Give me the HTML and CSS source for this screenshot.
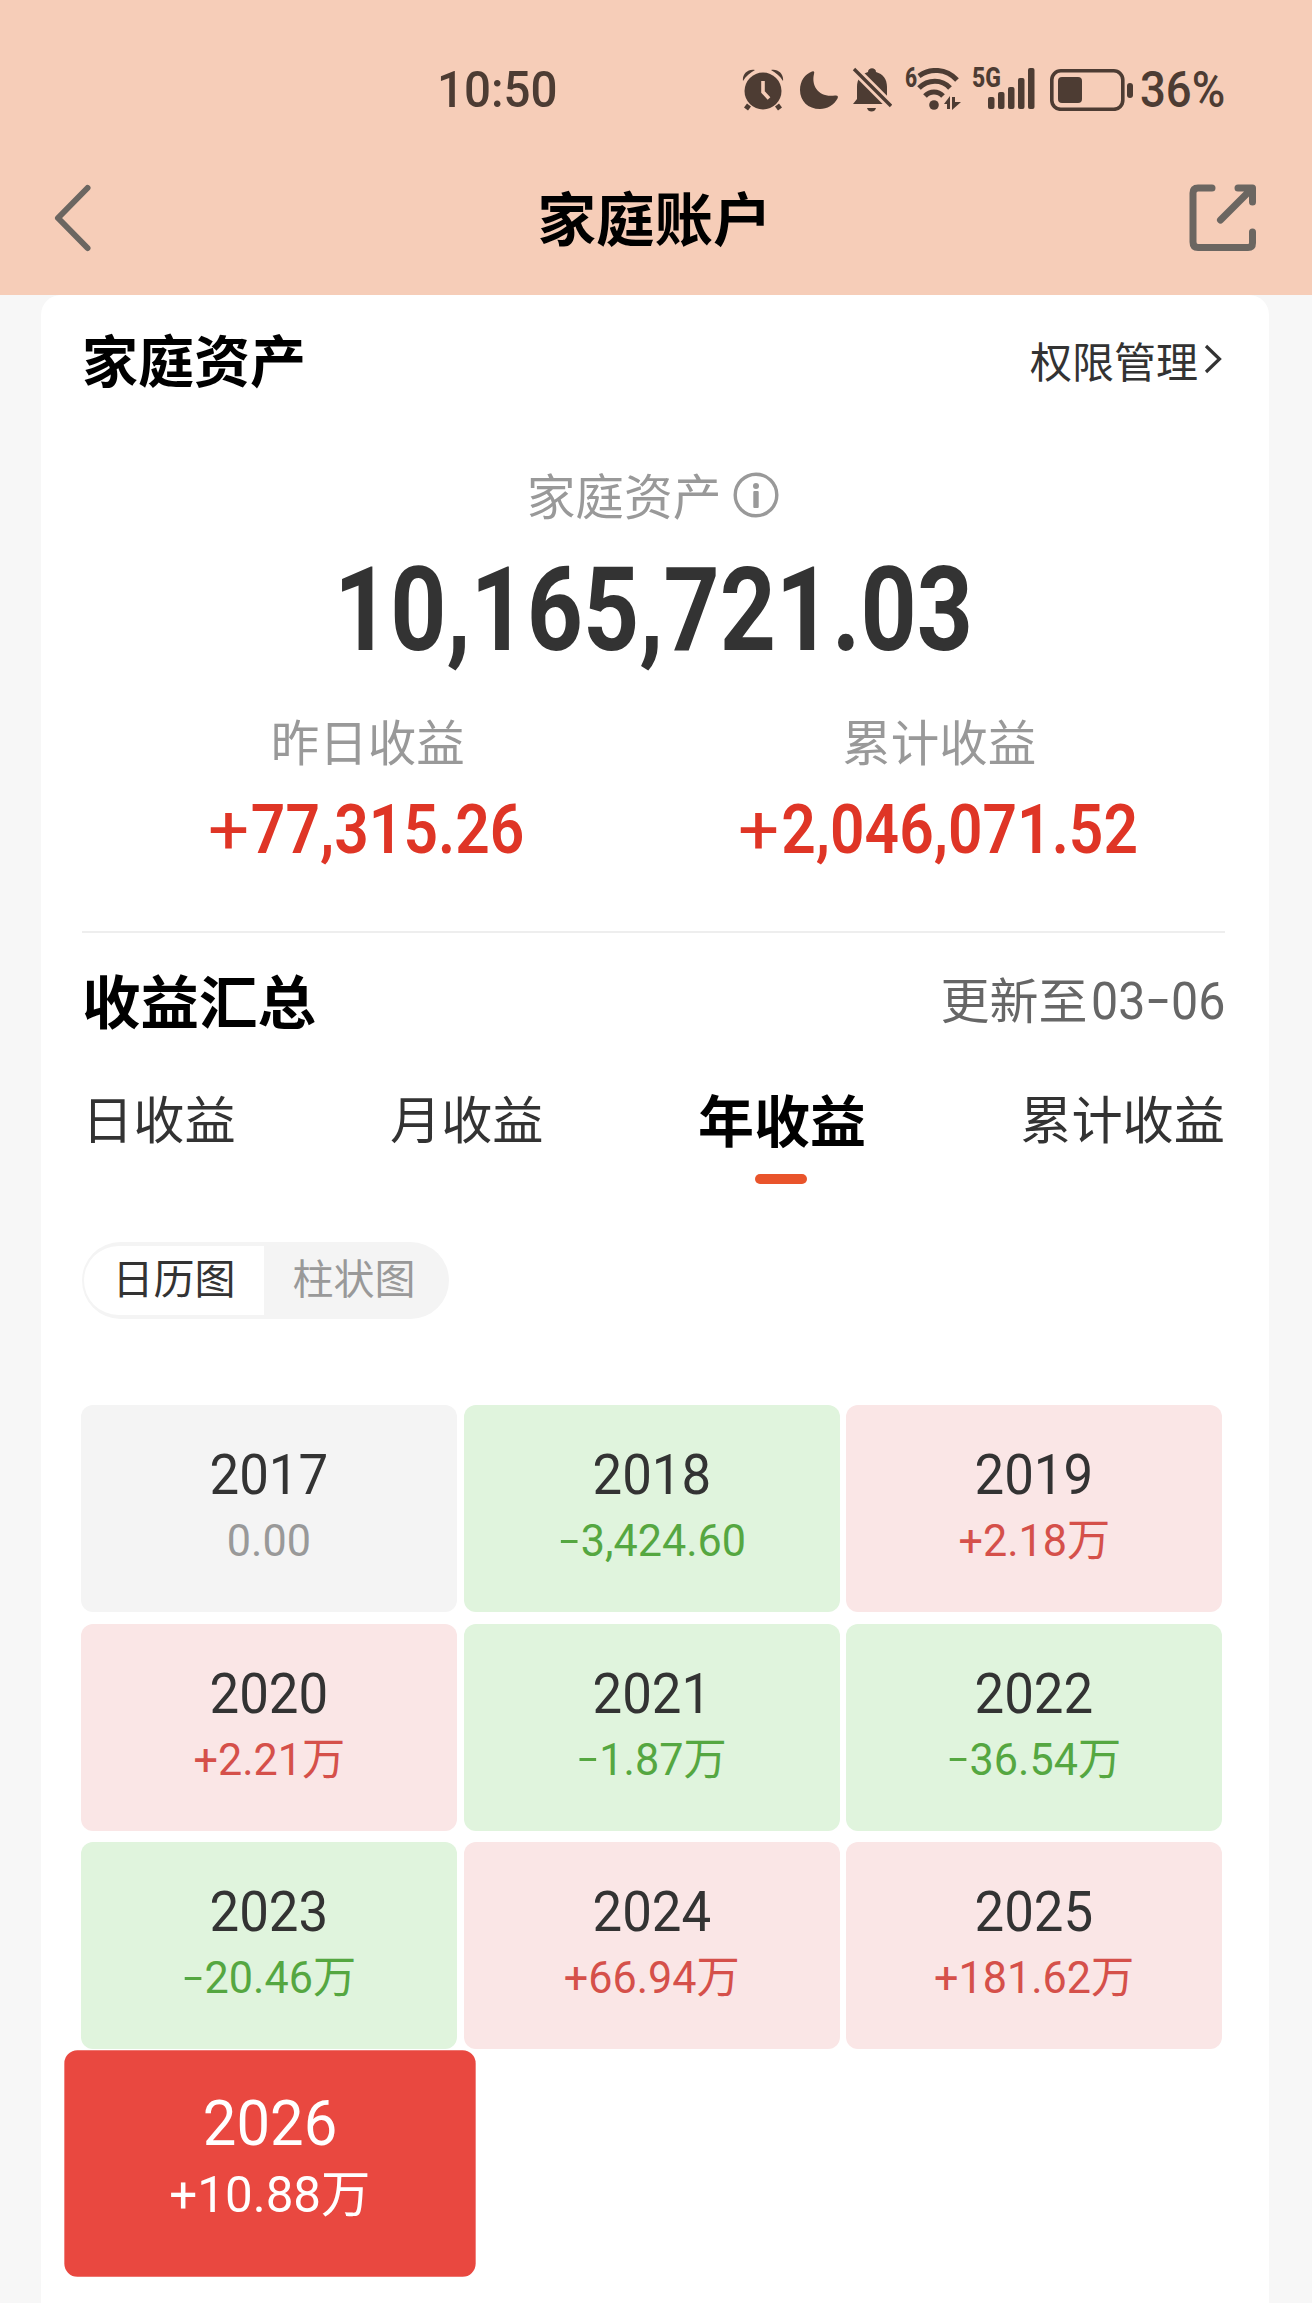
FILE: index.html
```html
<!DOCTYPE html>
<html lang="zh-CN">
<head>
  <meta charset="UTF-8">
  <meta name="viewport" content="width=device-width, initial-scale=1.0">
  <title>家庭账户</title>
  <link rel="stylesheet" href="styles.css">
</head>
<body>
  <header class="header">
    <div class="status-bar">
      <span class="time">10:50</span>
      <div class="status-icons">
        <svg class="icon-alarm" width="42" height="42" viewBox="0 0 42 42">
          <circle cx="21" cy="22" r="18.5" fill="#4d3c33"/>
          <path d="M7 36l-3 4M35 36l3 4" stroke="#4d3c33" stroke-width="5"/>
          <path d="M1 12C0 5 6 -.5 13 1C8 4 4 7 1 12ZM41 12C42 5 36 -.5 29 1C34 4 38 7 41 12Z" fill="#4d3c33"/>
          <path d="M21 12v11l6 6.500" fill="none" stroke="#f6cdb8" stroke-width="3.600"/>
        </svg>
        <svg class="icon-moon" width="40" height="40" viewBox="0 0 40 40">
          <path d="M13 1.500Q16 .5 15 4C12 16 20 28 36 25.500Q40 25 38.500 28.500C35 35 28 39 21 39C9 39 1 31 1 20C1 11 6 4 13 1.500Z" fill="#4d3c33"/>
        </svg>
        <svg class="icon-bell" width="40" height="46" viewBox="0 0 40 46">
          <path d="M1 37L5 32V20C5 12 9 7 16 5C16 0 24 0 24 5C31 7 35 12 35 20V32L37 37Z" fill="#4d3c33"/>
          <path d="M15 41h9q-1 3.500-4.500 3.500T15 41z" fill="#4d3c33"/>
          <path d="M2 2L40 40" stroke="#f6cdb8" stroke-width="9"/>
          <path d="M2 2L39 39" stroke="#4d3c33" stroke-width="3.400"/>
        </svg>
        <div class="wifi">
          <span class="wifi-gen">6</span>
          <svg width="46" height="44" viewBox="0 0 46 44">
            <g fill="none" stroke="#4d3c33" stroke-width="5">
              <path d="M3 8C14 0 30 0 41 12"/>
              <path d="M3 20C12 11 26 11 34 20"/>
              <path d="M9 28C14 22.500 22 22.500 27 28"/>
            </g>
            <circle cx="18" cy="37" r="4.800" fill="#4d3c33"/>
            <path d="M28 36L34 28V41H31V36ZM36 29H39V34H45L36 42Z" fill="#4d3c33"/>
          </svg>
        </div>
        <div class="signal">
          <span class="signal-gen">5G</span>
          <svg width="48" height="42" viewBox="0 0 48 42" fill="#4d3c33">
            <rect x="1" y="29" width="6.500" height="12" rx="2"/>
            <rect x="11" y="24" width="6.500" height="17" rx="2"/>
            <rect x="21" y="19" width="6.500" height="22" rx="2"/>
            <rect x="31" y="10" width="6.500" height="31" rx="2"/>
            <rect x="41" y="0" width="6.500" height="41" rx="2"/>
          </svg>
        </div>
        <svg class="icon-battery" width="84" height="42" viewBox="0 0 84 42">
          <rect x="1.800" y="1.800" width="71" height="38.500" rx="9" fill="none" stroke="#4d3c33" stroke-width="3.600"/>
          <rect x="8" y="8" width="24" height="26" rx="4" fill="#4d3c33"/>
          <rect x="77" y="14" width="6" height="15" rx="3" fill="#4d3c33"/>
        </svg>
        <span class="battery-text">36%</span>
      </div>
    </div>
    <div class="nav-bar">
      <svg width="40" height="70" viewBox="0 0 40 70">
        <path d="M34.500 5L5 35L34.500 65" fill="none" stroke="#6b6661" stroke-width="6" stroke-linecap="round" stroke-linejoin="round"/>
      </svg>
      <h1 class="title">家庭账户</h1>
      <svg width="68" height="68" viewBox="0 0 68 68">
        <g fill="none" stroke="#6b6661" stroke-width="7" stroke-linecap="round" stroke-linejoin="round">
          <path d="M23 4H9Q4 4 4 9V58Q4 63.500 9 63.500H59Q63.500 63.500 63.500 59V48"/>
          <path d="M49 4H63.500V18M61 6.500L31.500 36"/>
        </g>
      </svg>
    </div>
  </header>

  <main class="card">
    <div class="card-head">
      <h2 class="head-title">家庭资产</h2>
      <a class="manage">权限管理
        <svg width="20" height="30" viewBox="0 0 20 30"><path d="M2 2L15.500 15L2 28" fill="none" stroke="#333" stroke-width="3.200"/></svg>
      </a>
    </div>

    <div class="asset-label"><span class="asset-name">家庭资产</span>
      <svg width="46" height="46" viewBox="0 0 46 46">
        <circle cx="23" cy="23" r="20.800" fill="none" stroke="#999" stroke-width="3.400"/>
        <circle cx="23" cy="14" r="3" fill="#999"/>
        <rect x="20.300" y="19" width="5.400" height="17" rx="1" fill="#999"/>
      </svg>
    </div>
    <div class="asset-total">10,165,721.03</div>

    <div class="profit-row">
      <div class="profit">
        <div class="profit-label">昨日收益</div>
        <div class="profit-value"><span class="plus">+</span>77,315.26</div>
      </div>
      <div class="profit">
        <div class="profit-label">累计收益</div>
        <div class="profit-value"><span class="plus">+</span>2,046,071.52</div>
      </div>
    </div>

    <div class="summary-head">
      <h2 class="summary-title">收益汇总</h2>
      <span class="updated">更新至<span class="updated-date">03<i class="dash"></i>06</span></span>
    </div>

    <nav class="tabs">
      <a class="tab">日收益</a>
      <a class="tab">月收益</a>
      <a class="tab active">年收益</a>
      <a class="tab">累计收益</a>
    </nav>

    <div class="switch">
      <span class="switch-item on">日历图</span>
      <span class="switch-item">柱状图</span>
    </div>

    <div class="years">
      <div class="year flat"><span class="year-name">2017</span><span class="year-value">0.00</span></div>
      <div class="year down"><span class="year-name">2018</span><span class="year-value"><i class="dash"></i>3,424.60</span></div>
      <div class="year up"><span class="year-name">2019</span><span class="year-value">+2.18万</span></div>
      <div class="year up"><span class="year-name">2020</span><span class="year-value">+2.21万</span></div>
      <div class="year down"><span class="year-name">2021</span><span class="year-value"><i class="dash"></i>1.87万</span></div>
      <div class="year down"><span class="year-name">2022</span><span class="year-value"><i class="dash"></i>36.54万</span></div>
      <div class="year down"><span class="year-name">2023</span><span class="year-value"><i class="dash"></i>20.46万</span></div>
      <div class="year up"><span class="year-name">2024</span><span class="year-value">+66.94万</span></div>
      <div class="year up"><span class="year-name">2025</span><span class="year-value">+181.62万</span></div>
      <div class="year up selected"><span class="year-name">2026</span><span class="year-value">+10.88万</span></div>
    </div>
  </main>
</body>
</html>
```
FILE: styles.css
```css
* {
  box-sizing: border-box;
}

body {
  margin: 0;
  height: 2303px;
  overflow: hidden;
  font-family: Roboto, "Noto Sans CJK SC", sans-serif;
  background-color: #f7f7f7;
  color: #333;
}

h1, h2 {
  margin: 0;
  color: #000;
}

.header {
  height: 295px;
  background-color: #f6cdb8;
}

/* status bar */
.status-bar {
  display: flex;
  justify-content: space-between;
  height: 141px;
  padding: 60px 84px 0 437px;
  color: #4d3c33;
}

.time,
.battery-text {
  font-size: 50px;
  font-weight: 500;
  line-height: 60px;
}

.time {
  height: 60px;
  transform: scaleX(0.95);
  transform-origin: left;
}

.status-icons {
  display: flex;
  align-items: center;
  height: 60px;
}

.icon-moon {
  margin-left: 15px;
}

.icon-bell {
  margin-left: 13px;
}

.wifi,
.signal {
  display: flex;
  align-items: flex-start;
  height: 44px;
}

.wifi {
  margin-left: 13px;
}

.wifi-gen,
.signal-gen {
  font-size: 28px;
  font-weight: 800;
  line-height: 20px;
}

.wifi-gen {
  width: 11px;
  transform: scaleX(0.75);
  transform-origin: left;
}

.signal {
  margin-left: 10px;
}

.signal-gen {
  width: 15px;
  transform: scaleX(0.82);
  transform-origin: left;
}

.icon-battery {
  margin-left: 15px;
}

.battery-text {
  width: 88px;
  margin-left: 6px;
  transform: scaleX(0.91);
  transform-origin: left;
}

/* title row */
.nav-bar {
  display: flex;
  align-items: center;
  justify-content: space-between;
  height: 154px;
  padding: 0 55px 0 53px;
}

.title {
  padding: 6px 0 0 27px;
  font-size: 58.5px;
  line-height: 80px;
}

.card {
  height: 2008px;
  margin: 0 43px 0 41px;
  padding: 0 44px 0 41px;
  background-color: #fff;
  border-radius: 20px 20px 0 0;
}

.card-head {
  display: flex;
  align-items: center;
  justify-content: space-between;
  height: 131px;
}

.head-title {
  padding-bottom: 6px;
  font-size: 56px;
}

.manage {
  display: flex;
  align-items: center;
  gap: 6px;
  padding: 0 1px 3px 0;
  font-size: 42px;
}

.asset-label {
  display: flex;
  align-items: center;
  justify-content: center;
  gap: 12px;
  height: 70px;
  margin-top: 34px;
  padding-right: 1px;
  color: #999;
  font-size: 48.7px;
}

.asset-name {
  padding-bottom: 3px;
}

.asset-total {
  height: 140px;
  margin-top: 10px;
  font-size: 116px;
  font-weight: 700;
  line-height: 140px;
  text-align: center;
  transform: scaleX(0.845);
}

.profit-row {
  display: flex;
  height: 253px;
  border-bottom: 2px solid #eee;
}

.profit {
  width: 50%;
  text-align: center;
}

.profit-label {
  height: 70px;
  margin-top: 30px;
  color: #999;
  font-size: 48.5px;
  line-height: 70px;
}

.profit-value {
  height: 80px;
  margin-top: 10px;
  color: #df3526;
  font-size: 68px;
  font-weight: 600;
  line-height: 80px;
  transform: scaleX(0.89);
}

.plus {
  display: inline-block;
  margin-right: 6px;
  font-weight: 400;
  transform: scaleX(1.2);
}

.summary-head {
  display: flex;
  align-items: center;
  justify-content: space-between;
  height: 136px;
}

.summary-title {
  padding-bottom: 5px;
  font-size: 58.5px;
}

.updated {
  padding-bottom: 8px;
  color: #666;
  font-size: 49px;
}

.updated-date {
  display: inline-block;
  margin-left: -7px;
  font-size: 52px;
  transform: scaleX(0.93);
  transform-origin: right;
}

.dash {
  display: inline-block;
  width: 0.4em;
  height: 0.075em;
  margin: 0 0.07em 0.3em 0.06em;
  background-color: currentColor;
}

.tabs {
  display: flex;
  align-items: center;
  justify-content: space-between;
  height: 96px;
}

.tab {
  position: relative;
  font-size: 51.2px;
}

.tab.active {
  color: #000;
  font-size: 56px;
  font-weight: 700;
}

.tab.active::after {
  content: "";
  position: absolute;
  bottom: -26px;
  left: 50%;
  width: 52px;
  height: 10px;
  margin-left: -27px;
  border-radius: 5px;
  background-color: #e9542b;
}

.switch {
  display: flex;
  width: 367px;
  height: 77px;
  margin-top: 77px;
  padding: 4px 2px;
  border-radius: 39px;
  background-color: #f4f4f4;
}

.switch-item {
  width: 180px;
  color: #999;
  font-size: 41px;
  line-height: 69px;
  text-align: center;
}

.switch-item.on {
  color: #333;
  background-color: #fff;
  border-radius: 35px 0 0 35px;
}

/* calendar of years */
.years {
  display: grid;
  grid-template-columns: repeat(3, 376px);
  grid-auto-rows: 207px;
  gap: 11.5px 6.6px;
  margin: 86px 0 0 -1px;
}

.year {
  display: flex;
  flex-direction: column;
  align-items: center;
  padding-top: 35px;
  border-radius: 12px;
}

.year-name {
  font-size: 55px;
  line-height: 70px;
  transform: scaleX(0.96);
}

.year-value {
  font-size: 44px;
  line-height: 62px;
  transform: scaleX(0.98);
}

.flat {
  background-color: #f4f4f4;
}

.flat .year-value {
  color: #999;
}

.up {
  background-color: #fae6e6;
}

.up .year-value {
  color: #d5504a;
}

.down {
  background-color: #e0f4dd;
}

.down .year-value {
  color: #55a741;
}

.year.selected {
  margin: -1px -1px 1px 1px;
  padding-top: 33px;
  background-color: #e94840;
  color: #fff;
  transform: scale(1.094);
}

.year.selected .year-name {
  font-size: 57px;
}

.year.selected .year-value {
  color: #fff;
  font-size: 46px;
  line-height: 58px;
}
```
